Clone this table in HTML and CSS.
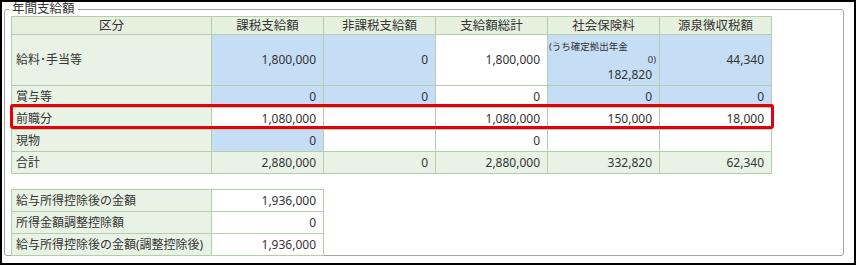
FILE: index.html
```html
<!DOCTYPE html>
<html lang="ja">
<head>
<meta charset="utf-8">
<title>年間支給額</title>
<link rel="stylesheet" href="styles.css">
</head>
<body>
<div class="frame">
  <fieldset class="group">
    <legend>年間支給額</legend>
    <div class="table-wrap">
      <table class="grid main">
        <colgroup>
          <col class="c-label">
          <col class="c-num"><col class="c-num"><col class="c-num"><col class="c-num"><col class="c-num">
        </colgroup>
        <thead>
          <tr class="r-head">
            <th>区分</th><th>課税支給額</th><th>非課税支給額</th><th>支給額総計</th><th>社会保険料</th><th>源泉徴収税額</th>
          </tr>
        </thead>
        <tbody>
          <tr class="r-tall">
            <td class="lbl">給料･手当等</td>
            <td class="num blue">1,800,000</td>
            <td class="num blue">0</td>
            <td class="num">1,800,000</td>
            <td class="num blue ins">
              <div class="ins-note">(うち確定拠出年金</div>
              <div class="ins-sub">0)</div>
              <div class="ins-val">182,820</div>
            </td>
            <td class="num blue">44,340</td>
          </tr>
          <tr class="r">
            <td class="lbl">賞与等</td>
            <td class="num blue">0</td>
            <td class="num blue">0</td>
            <td class="num">0</td>
            <td class="num blue">0</td>
            <td class="num blue">0</td>
          </tr>
          <tr class="r">
            <td class="lbl">前職分</td>
            <td class="num">1,080,000</td>
            <td class="num"></td>
            <td class="num">1,080,000</td>
            <td class="num">150,000</td>
            <td class="num">18,000</td>
          </tr>
          <tr class="r">
            <td class="lbl">現物</td>
            <td class="num blue">0</td>
            <td class="num"></td>
            <td class="num">0</td>
            <td class="num"></td>
            <td class="num"></td>
          </tr>
          <tr class="r total">
            <td class="lbl">合計</td>
            <td class="num">2,880,000</td>
            <td class="num">0</td>
            <td class="num">2,880,000</td>
            <td class="num">332,820</td>
            <td class="num">62,340</td>
          </tr>
        </tbody>
      </table>
      <div class="highlight"></div>
    </div>
    <table class="grid sub">
      <colgroup><col class="c-label"><col class="c-num"></colgroup>
      <tbody>
        <tr class="r2"><td class="lbl">給与所得控除後の金額</td><td class="num">1,936,000</td></tr>
        <tr class="r2"><td class="lbl">所得金額調整控除額</td><td class="num">0</td></tr>
        <tr class="r2"><td class="lbl">給与所得控除後の金額(調整控除後)</td><td class="num">1,936,000</td></tr>
      </tbody>
    </table>
  </fieldset>
</div>
</body>
</html>
```

FILE: styles.css
```css
html, body {
  margin: 0;
  padding: 0;
  background: #ffffff;
}

body {
  font-family: "Noto Sans", "Noto Sans CJK JP", sans-serif;
  font-size: 12px;
  color: #333333;
}

.frame {
  box-sizing: border-box;
  width: 856px;
  height: 265px;
  border: 2px solid #000000;
  padding: 0 0 0 2px;
  overflow: hidden;
}

.group {
  box-sizing: border-box;
  width: 840px;
  height: 254px;
  margin: 0;
  padding: 0 6px;
  border: 1px solid #a4a4a4;
  border-radius: 3px;
}

.group legend {
  padding: 0 3px;
  margin-left: -2px;
  font-size: 12.5px;
  line-height: 14px;
  color: #333333;
}

.table-wrap {
  position: relative;
  width: 761px;
}

.grid {
  border-collapse: collapse;
  table-layout: fixed;
}

.grid.main {
  width: 761px;
}

.grid.sub {
  width: 313px;
  margin-top: 15px;
}

.c-label { width: 200px; }
.c-num { width: 112px; }

.grid th,
.grid td {
  border: 1px solid #b4cdaa;
  padding: 0 7px 0 4px;
  line-height: 14px;
  white-space: nowrap;
  overflow: hidden;
}

.grid th {
  background: #e5f0df;
  font-weight: normal;
  text-align: center;
  font-size: 12.5px;
  height: 17px;
  padding: 0;
}

.grid td.lbl {
  background: #e9f3e5;
  text-align: left;
}

.grid td.num {
  background: #ffffff;
  text-align: right;
}

.grid td.num.blue {
  background: #c6ddf6;
}

.r-tall td {
  height: 48px;
}

.r td {
  height: 21px;
}

.r.total td {
  background: #e9f3e5;
}

.r2 td {
  height: 21px;
}

.ins {
  vertical-align: bottom;
  padding-bottom: 2px !important;
}

.ins-note {
  text-align: left;
  font-size: 9.5px;
  line-height: 12px;
  margin-left: -3px;
}

.ins-sub {
  font-size: 9.5px;
  line-height: 14px;
  margin-right: -4px;
}

.ins-val {
  line-height: 16px;
}

.highlight {
  position: absolute;
  left: -1px;
  top: 88px;
  width: 758px;
  height: 19px;
  border: 3px solid #e3000f;
  border-radius: 3px;
  pointer-events: none;
}
```
